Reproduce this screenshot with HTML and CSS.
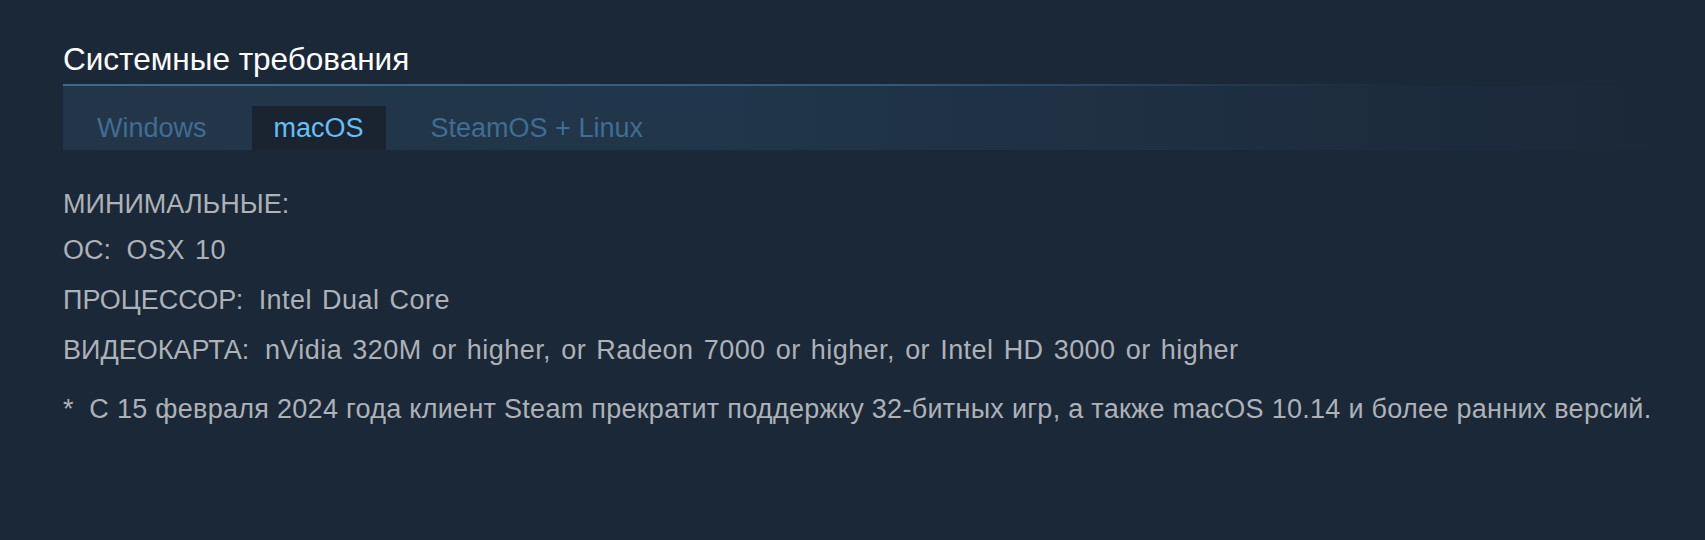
FILE: index.html
```html
<!DOCTYPE html>
<html>
<head>
    <title>Системные требования</title>
    <meta charset="utf-8">
    <link rel="stylesheet" href="styles.css">
</head>
<body>
    <div class="sysreq">
        <h2 class="sysreq-title">Системные требования</h2>

        <div class="sysreq-tabs">
            <div class="sysreq-tab">Windows</div>
            <div class="sysreq-tab active">macOS</div>
            <div class="sysreq-tab">SteamOS + Linux</div>
        </div>

        <div class="sysreq-contents">
            <div class="sysreq-head">МИНИМАЛЬНЫЕ:</div>
            <ul class="sysreq-list">
                <li><span class="label">ОС:</span> <span class="value">OSX 10</span></li>
                <li><span class="label">ПРОЦЕССОР:</span> <span class="value">Intel Dual Core</span></li>
                <li><span class="label">ВИДЕОКАРТА:</span> <span class="value">nVidia 320M or higher, or Radeon 7000 or higher, or Intel HD 3000 or higher</span></li>
            </ul>
            <div class="sysreq-note">*&nbsp; С 15 февраля 2024 года клиент Steam прекратит поддержку 32-битных игр, а также macOS 10.14 и более ранних версий.</div>
        </div>
    </div>
</body>
</html>
```

FILE: styles.css
```css
body {
    margin: 0;
    background: #1b2838;
    font-family: "Liberation Sans", Arial, sans-serif;
}
.sysreq {
    padding: 41px 0 0 63px;
    width: 1600px;
}
.sysreq-title {
    margin: 0;
    padding-bottom: 9px;
    font-size: 31.5px;
    line-height: 36px;
    font-weight: normal;
    color: #ffffff;
    background: linear-gradient(to right, #3d6b8e 0%, #35597a 50%, rgba(53,89,122,0) 85%) no-repeat left bottom / 100% 2px;
}
.sysreq-tabs {
    display: flex;
    gap: 23px;
    padding: 20px 0 0 12px;
    background: linear-gradient(to right, #233549 0%, #21364a 40%, rgba(27,40,56,0) 100%);
}
.sysreq-tab {
    padding: 0 22px;
    line-height: 44px;
    font-size: 27px;
    color: #3f6d93;
}
.sysreq-tab.active {
    background: #1a2330;
    color: #66c0f4;
}
.sysreq-contents {
    padding-top: 37px;
    color: #acb2b8;
    font-size: 27px;
}
.sysreq-head {
    line-height: 34px;
}
.sysreq-list {
    list-style: none;
    margin: 0;
    padding: 0;
}
.sysreq-list li {
    line-height: 34px;
    margin-top: 16px;
}
.sysreq-list li:first-child {
    margin-top: 12px;
}
.label {
    margin-right: 8px;
}
.value {
    letter-spacing: 0.45px;
    word-spacing: 2.2px;
}
.sysreq-note {
    margin-top: 25px;
    line-height: 34px;
    letter-spacing: 0.28px;
    white-space: nowrap;
}
```
